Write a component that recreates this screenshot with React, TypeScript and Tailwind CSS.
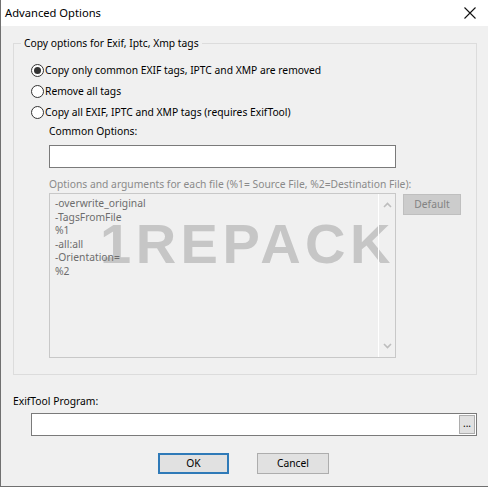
import React from "react";

const font = { fontFamily: '"Segoe UI", "Noto Sans", "Liberation Sans", sans-serif' };

// Lignes affichées dans la zone des arguments
const argLines = [
  "-overwrite_original",
  "-TagsFromFile",
  "%1",
  "-all:all",
  "-Orientation=",
  "%2",
];

const radioOptions = [
  { label: "Copy only common EXIF tags, IPTC and XMP are removed", checked: true },
  { label: "Remove all tags", checked: false },
  { label: "Copy all EXIF, IPTC and XMP tags (requires ExifTool)", checked: false },
];

function Radio({ checked }: { checked: boolean }) {
  return (
    <span className="w-[13px] h-[13px] rounded-full border border-[#333333] bg-white flex items-center justify-center shrink-0">
      {checked && <span className="w-[7px] h-[7px] rounded-full bg-[#333333]" />}
    </span>
  );
}

function Chevron({ up }: { up: boolean }) {
  return (
    <svg width="9" height="6" viewBox="0 0 9 6" className="text-[#bdbdbd]">
      <path
        d={up ? "M1 5 L4.5 1.5 L8 5" : "M1 1 L4.5 4.5 L8 1"}
        fill="none"
        stroke="currentColor"
        strokeWidth={1.6}
      />
    </svg>
  );
}

export default function App() {
  return (
    <div
      className="w-[488px] h-[487px] bg-[#f0f0f0] border-l border-b border-[#707070] flex flex-col text-[10.3px] text-black overflow-hidden"
      style={font}
    >
      {/* Title bar */}
      <div className="h-[26px] bg-white flex items-center justify-between pl-[4px] pr-[12px] shrink-0">
        <span className="text-[11.2px] leading-none">Advanced Options</span>
        <svg width="12" height="12" viewBox="0 0 12 12">
          <path d="M0.5 0.5 L11.5 11.5 M11.5 0.5 L0.5 11.5" stroke="#111" strokeWidth={1.1} />
        </svg>
      </div>

      <div className="flex flex-col pl-[12px] pr-[11px]">
        {/* Group box */}
        <fieldset className="mt-[9px] border border-[#dcdcdc] pl-[4px] pt-[9px] pb-[16px]">
          <legend className="ml-[3px] px-[3px] h-[16px] leading-[16px]">
            Copy options for Exif, Iptc, Xmp tags
          </legend>

          <div className="flex flex-col gap-[1px] pl-[13px]">
            {radioOptions.map((opt) => (
              <div key={opt.label} className="h-[20px] flex items-center gap-[1px]">
                <Radio checked={opt.checked} />
                <span className="leading-none">{opt.label}</span>
              </div>
            ))}
          </div>

          <div className="pl-[31px] flex flex-col">
            <div className="h-[16px] leading-[16px] mt-[1px]">Common Options:</div>
            <div className="mt-[6px] w-[347px] h-[23px] bg-white border border-[#7a7a7a]" />
            <div className="mt-[8px] h-[16px] leading-[16px] text-[#8a8a8a]">
              Options and arguments for each file (%1= Source File, %2=Destination File):
            </div>

            <div className="mt-[1px] flex items-start">
              <div className="relative w-[347px] h-[165px] border border-[#c8c8c8] flex">
                {/* Watermark */}
                <div
                  className="absolute left-[50px] top-[22px] text-[56px] font-bold leading-none tracking-[4.5px] text-[#c6c6c6] select-none"
                  style={{ fontFamily: '"Liberation Sans", Arial, sans-serif' }}
                >
                  1REPACK
                </div>
                <div className="relative flex-1 pl-[5px] pt-[3px] flex flex-col text-[#6d6d6d] leading-[13.5px]">
                  {argLines.map((line) => (
                    <span key={line}>{line}</span>
                  ))}
                </div>
                <div className="relative w-[17px] border-l border-white flex flex-col items-center justify-between py-[8px]">
                  <Chevron up />
                  <Chevron up={false} />
                </div>
              </div>
              <div className="ml-[7px] mt-[1px] w-[58px] h-[21px] bg-[#cccccc] border border-[#bfbfbf] text-[#838383] flex items-center justify-center">
                Default
              </div>
            </div>
          </div>
        </fieldset>

        {/* ExifTool program */}
        <div className="mt-[18px] h-[16px] leading-[16px]">ExifTool Program:</div>
        <div className="mt-[4px] ml-[18px] w-[446px] h-[23px] bg-white border border-[#7a7a7a] flex justify-end items-stretch">
          <div className="w-[16px] my-[1px] mr-[1px] bg-[#e1e1e1] border border-[#adadad] flex items-end justify-center pb-[5px] text-[10px] leading-none">
            ...
          </div>
        </div>

        {/* Buttons */}
        <div className="mt-[17px] flex pl-[145px] gap-[28px]">
          <div className="w-[71px] h-[21px] bg-[#e1e1e1] border-2 border-[#2f7ab8] flex items-center justify-center">
            OK
          </div>
          <div className="w-[72px] h-[21px] bg-[#e1e1e1] border border-[#adadad] flex items-center justify-center">
            Cancel
          </div>
        </div>
      </div>
    </div>
  );
}
